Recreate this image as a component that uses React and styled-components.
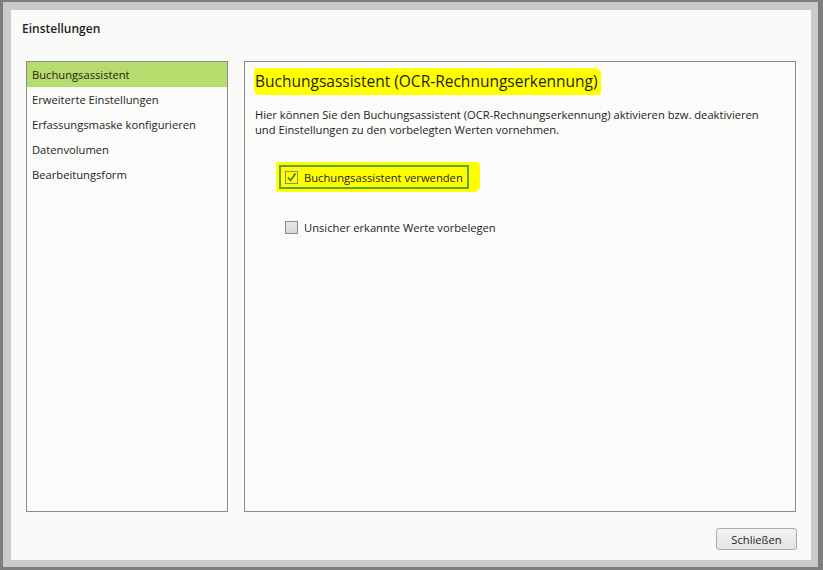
import React from 'react'
import styled, { createGlobalStyle } from 'styled-components'

const Global = createGlobalStyle`
  html, body { margin: 0; padding: 0; }
  body {
    background: #7e7e7e;
    font-family: "Open Sans", "Noto Sans", sans-serif;
    color: #1e1e1e;
  }
`

const Frame = styled.div`
  width: 823px;
  height: 570px;
  box-sizing: border-box;
  padding: 2px 5px 3px 3px;
  display: flex;
`

const Dialog = styled.div`
  flex: 1;
  border-style: solid;
  border-color: #cacaca;
  border-width: 8px 7px 7px 8px;
  background: #fafaf9;
  display: flex;
  flex-direction: column;
  padding: 11px 15px 10px 15px;
  box-sizing: border-box;
`

const Title = styled.div`
  font-size: 12px;
  font-weight: 600;
  margin-left: -4px;
  height: 40px;
  line-height: 16px;
`

const Body = styled.div`
  display: grid;
  grid-template-columns: 202px 1fr;
  gap: 16px;
  height: 451px;
`

const Panel = styled.div`
  border: 1px solid #8c8c8c;
  background: #fbfbfa;
  box-sizing: border-box;
`

const NavList = styled(Panel)`
  display: flex;
  flex-direction: column;
`

const NavItem = styled.div`
  height: 25px;
  line-height: 25px;
  padding-left: 5px;
  font-size: 11.2px;
  background: ${p => (p.$active ? '#b7dc6e' : 'transparent')};
`

const Content = styled(Panel)`
  padding: 6px 10px;
`

const Heading = styled.div`
  display: inline-block;
  font-size: 15.5px;
  padding: 2px 3px 3px 1px;
  margin-left: -1px;
  background: #ffff00;
  border-radius: 3px 6px 2px 5px;
`

const Text = styled.p`
  margin: 12px 0 0 0;
  font-size: 11.2px;
  line-height: 15px;
  white-space: nowrap;
`

const Options = styled.div`
  display: flex;
  flex-direction: column;
  align-items: flex-start;
  padding-left: 21px;
  margin-top: 25px;
  gap: 20px;
`

const Marked = styled.div`
  background: ${p => (p.$on ? '#ffff00' : 'transparent')};
  padding: 3px 11px 3px 3px;
  border-radius: 2px 4px 6px 2px;
`

const OptionRow = styled.label`
  display: flex;
  align-items: center;
  gap: 6px;
  font-size: 11.2px;
  height: 20px;
  padding: 0 4px 0 4px;
  border: ${p => (p.$focused ? '2px solid #5ba52f' : '2px solid transparent')};
`

const Box = styled.span`
  width: 11px;
  height: 11px;
  border: 1px solid #8a8a8a;
  background: ${p => (p.$checked ? 'transparent' : 'linear-gradient(#e6e6e6, #d8d8d8)')};
  display: inline-flex;
  align-items: center;
  justify-content: center;
`

const Footer = styled.div`
  display: flex;
  justify-content: flex-end;
  margin-top: 16px;
`

const Button = styled.button`
  width: 81px;
  height: 22px;
  font-family: inherit;
  font-size: 11.2px;
  color: #1e1e1e;
  border: 1px solid #acacac;
  border-radius: 3px;
  background: linear-gradient(#f4f4f4, #e3e3e3);
  padding: 0;
  margin-right: -1px;
`

const Check = () => (
  <svg width="11" height="11" viewBox="0 0 11 11">
    <path d="M2 5.5 L4.5 8.5 L9.5 1.5" fill="none" stroke="#3b7d1c" strokeWidth="1.6" />
  </svg>
)

const nav = [
  'Buchungsassistent',
  'Erweiterte Einstellungen',
  'Erfassungsmaske konfigurieren',
  'Datenvolumen',
  'Bearbeitungsform',
]

export default function App() {
  return (
    <>
      <Global />
      <Frame>
        <Dialog>
          <Title>Einstellungen</Title>
          <Body>
            <NavList>
              {nav.map((n, i) => (
                <NavItem key={n} $active={i === 0}>{n}</NavItem>
              ))}
            </NavList>
            <Content>
              <Heading>Buchungsassistent (OCR-Rechnungserkennung)</Heading>
              <Text>
                Hier können Sie den Buchungsassistent (OCR-Rechnungserkennung) aktivieren bzw. deaktivieren
                <br />
                und Einstellungen zu den vorbelegten Werten vornehmen.
              </Text>
              <Options>
                <Marked $on>
                  <OptionRow $focused>
                    <Box $checked><Check /></Box>
                    Buchungsassistent verwenden
                  </OptionRow>
                </Marked>
                <Marked>
                  <OptionRow>
                    <Box />
                    Unsicher erkannte Werte vorbelegen
                  </OptionRow>
                </Marked>
              </Options>
            </Content>
          </Body>
          <Footer>
            <Button>Schließen</Button>
          </Footer>
        </Dialog>
      </Frame>
    </>
  )
}
